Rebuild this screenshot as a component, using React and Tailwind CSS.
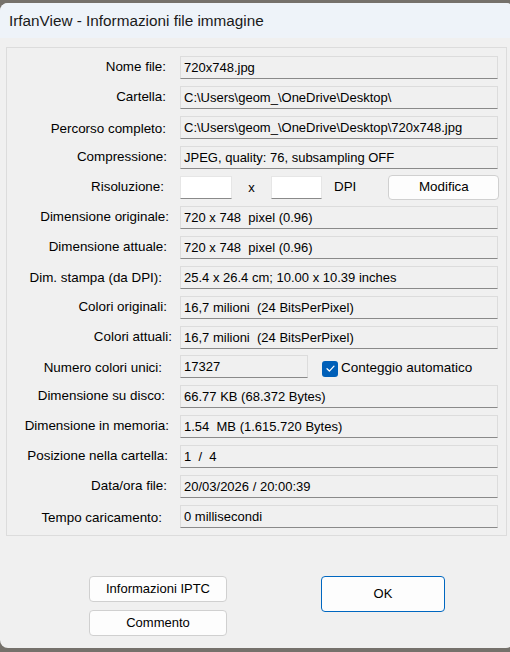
import React from "react";

const rows = [
  { label: "Nome file:", value: "720x748.jpg", pr: "pr-[6px]" },
  { label: "Cartella:", value: "C:\\Users\\geom_\\OneDrive\\Desktop\\", pr: "pr-[6px]" },
  { label: "Percorso completo:", value: "C:\\Users\\geom_\\OneDrive\\Desktop\\720x748.jpg", pr: "pr-[6px]", pt: "pt-[3px]" },
  { label: "Compressione:", value: "JPEG, quality: 76, subsampling OFF", pr: "pr-[5px]" },
  { type: "res" },
  { label: "Dimensione originale:", value: "720 x 748  pixel (0.96)", pr: "pr-[3px]" },
  { label: "Dimensione attuale:", value: "720 x 748  pixel (0.96)", pr: "pr-[5px]" },
  { label: "Dim. stampa (da DPI):", value: "25.4 x 26.4 cm; 10.00 x 10.39 inches", pr: "pr-[10px]", pt: "pt-[1px]" },
  { label: "Colori originali:", value: "16,7 milioni  (24 BitsPerPixel)", pr: "pr-[5px]" },
  { label: "Colori attuali:", value: "16,7 milioni  (24 BitsPerPixel)", pr: "pr-[0px]", h: "h-[29px]" },
  { type: "num" },
  { label: "Dimensione su disco:", value: "66.77 KB (68.372 Bytes)", pr: "pr-[7px]" },
  { label: "Dimensione in memoria:", value: "1.54  MB (1.615.720 Bytes)", pr: "pr-[3px]" },
  { label: "Posizione nella cartella:", value: "1  /  4", pr: "pr-[4px]" },
  { label: "Data/ora file:", value: "20/03/2026 / 20:00:39", pr: "pr-[5px]" },
  { label: "Tempo caricamento:", value: "0 millisecondi", pr: "pr-[10px]", pt: "pt-[3px]" },
];

function Label({ text, pr, pt }) {
  return (
    <div className={`w-[165px] shrink-0 h-[23px] flex items-center justify-end whitespace-pre text-[13.4px] ${pr} ${pt || ""}`}>
      {text}
    </div>
  );
}

function Box({ children, w = "w-[318px]" }) {
  return (
    <div className={`${w} h-[23px] shrink-0 bg-[#f0f0f0] border border-[#dcdcdc] border-b-[#8a8a8a] flex items-center pl-[3px] whitespace-pre`}>
      {children}
    </div>
  );
}

export default function App() {
  return (
    <div
      className="w-[510px] h-[652px] bg-[#75716b] pt-[3px] overflow-hidden text-black"
      style={{ fontFamily: '"Liberation Sans", Arial, sans-serif' }}
    >
      <div className="w-[514px] h-[645px] bg-[#f0f0f0] rounded-[8px] overflow-hidden flex flex-col">
        <div className="h-[35px] bg-[#eef3f9] flex items-center pl-[9px] text-[15.3px] text-[#1a1a1a] pt-[2px]">
          IrfanView - Informazioni file immagine
        </div>
        <div className="ml-[6px] mt-[9px] w-[501px] border border-[#dcdcdc] pt-[8px] text-[13px]">
          {rows.map((r, i) => {
            if (r.type === "res") {
              return (
                <div key={i} className="h-[30px] flex items-start">
                  <Label text="Risoluzione:" pr="pr-[8px]" />
                  <div className="ml-[8px] flex items-start">
                    <div className="w-[52px] h-[23px] bg-white border border-[#e6e6e6] border-b-[#8a8a8a]" />
                    <div className="w-[39px] h-[23px] flex items-center justify-center">x</div>
                    <div className="w-[51px] h-[23px] bg-white border border-[#e6e6e6] border-b-[#8a8a8a]" />
                    <div className="ml-[12px] h-[23px] flex items-center text-[13.4px]">DPI</div>
                    <button className="ml-[32px] -mt-[1px] w-[111px] h-[25px] bg-[#fdfdfd] border border-[#d0d0d0] rounded-[4px] flex items-center justify-center text-[13.4px]">
                      Modifica
                    </button>
                  </div>
                </div>
              );
            }
            if (r.type === "num") {
              return (
                <div key={i} className="h-[30px] flex items-start">
                  <Label text="Numero colori unici:" pr="pr-[10px]" pt="pt-[4px]" />
                  <div className="ml-[8px] flex items-start">
                    <Box w="w-[128px]">17327</Box>
                    <div className="ml-[14px] h-[23px] flex items-center pt-[4px]">
                      <div className="w-[16px] h-[16px] rounded-[3px] bg-[#005fb8] flex items-center justify-center">
                        <svg width="11" height="11" viewBox="0 0 12 12" fill="none">
                          <path d="M2.2 6.3 L4.8 8.8 L9.8 3.4" stroke="white" strokeWidth="1.4" strokeLinecap="round" strokeLinejoin="round" />
                        </svg>
                      </div>
                      <span className="ml-[3px] text-[13.5px]">Conteggio automatico</span>
                    </div>
                  </div>
                </div>
              );
            }
            return (
              <div key={i} className={`${r.h || "h-[30px]"} flex items-start`}>
                <Label text={r.label} pr={r.pr} pt={r.pt} />
                <div className="ml-[8px]">
                  <Box>{r.value}</Box>
                </div>
              </div>
            );
          })}
        </div>
        <div className="flex mt-[40px] text-[13px]">
          <div className="ml-[89px] flex flex-col gap-[8px]">
            <button className="w-[138px] h-[26px] bg-[#fdfdfd] border border-[#d0d0d0] rounded-[4px] flex items-center justify-center">
              Informazioni IPTC
            </button>
            <button className="w-[138px] h-[26px] bg-[#fdfdfd] border border-[#d0d0d0] rounded-[4px] flex items-center justify-center">
              Commento
            </button>
          </div>
          <button className="ml-[94px] w-[124px] h-[36px] bg-[#fdfdfd] border border-[#0067c0] rounded-[4px] flex items-center justify-center">
            OK
          </button>
        </div>
      </div>
    </div>
  );
}
